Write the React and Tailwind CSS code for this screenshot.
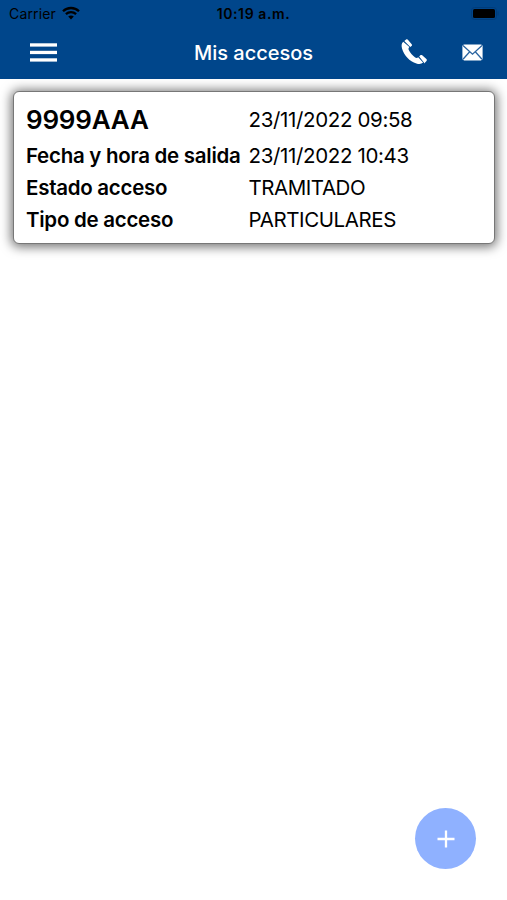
const rows = [
  { label: "Fecha y hora de salida", value: "23/11/2022 10:43", valueTracking: "tracking-[-0.35px]" },
  { label: "Estado acceso", value: "TRAMITADO", valueTracking: "tracking-[-0.45px]" },
  { label: "Tipo de acceso", value: "PARTICULARES", valueTracking: "tracking-[-0.4px]" }
];

function WifiIcon() {
  return (
    <svg className="ml-[6px] -mt-[2px]" width="18" height="14" viewBox="0 0 18 14" fill="none" stroke="#000" strokeWidth="2.3">
      <path d="M1 5.2C5.4.9 12.6.9 17 5.2" />
      <path d="M3.9 8.2c2.9-2.7 7.3-2.7 10.2 0" />
      <path d="M6.2 10.6c1.6-1.5 4-1.5 5.6 0L9 13.6z" fill="#000" stroke="none" />
    </svg>
  );
}

function PhoneIcon() {
  return (
    <svg width="26" height="26" viewBox="0 0 26 26" fill="#fff">
      <path d="M2.200 2.800C.6 4.200.2 6.600 1 9.400c2 7 7.600 12.800 14.400 15 2.800.9 5.200.6 6.700-.8l-4.900-5.300c-.9.9-2 .9-3 .2-2.900-1.900-5.100-4.600-6.400-7.400-.5-1.200-.4-2.100.6-3z" />
      <path d="m3.300 1.900 1.800-1.300c.7-.5 1.500-.4 2 .3l3.600 4.300c.5.700.4 1.400-.2 1.900l-1.200 1zM18.200 17.400l1.100-1.100c.6-.5 1.300-.5 1.900 0l4.200 3.800c.6.600.6 1.300.1 1.900l-2.300 2.400-.1-.6z" />
    </svg>
  );
}

function MailIcon() {
  return (
    <svg width="21" height="17" viewBox="0 0 21 17">
      <rect x=".4" y=".4" width="20.200" height="16" rx="1.800" fill="#fff" />
      <path d="m1 1.500 9.500 8.700L20 1.500M1 15.200l6.700-7.400M20 15.200l-6.700-7.400" fill="none" stroke="#2a64a0" strokeWidth="1.300" />
    </svg>
  );
}

function Header() {
  return (
    <header className="h-[79px] bg-[#00468b]">
      {/* Status bar */}
      <div className="grid h-[27px] grid-cols-3 items-center text-sm text-black">
        <div className="flex items-center pl-[9px]">
          <span className="tracking-[0.15px]">Carrier</span>
          <WifiIcon />
        </div>
        <span className="text-center font-semibold tracking-[0.6px]">10:19 a.m.</span>
        <div className="flex justify-end pr-[8px]">
          <svg width="28" height="13" viewBox="0 0 28 13">
            <rect x=".5" y=".5" width="25" height="12" rx="3" fill="none" stroke="#003c7a" />
            <rect x="2" y="2" width="22" height="9" rx="1.500" />
            <path d="M27 4.500v4" stroke="#003c7a" />
          </svg>
        </div>
      </div>

      {/* Navigation bar */}
      <div className="grid h-[52px] grid-cols-[1fr_auto_1fr] items-center pb-[2px]">
        <button className="ml-[29.5px]" aria-label="Menu">
          <svg width="27" height="19" viewBox="0 0 27 19" fill="#fff">
            <rect y=".3" width="27" height="3.300" />
            <rect y="7.800" width="27" height="3.300" />
            <rect y="15.300" width="27" height="3.300" />
          </svg>
        </button>
        <h1 className="pt-px text-xl font-medium text-white">Mis accesos</h1>
        <div className="flex items-center justify-end gap-[35px] pr-[24px]">
          <PhoneIcon />
          <MailIcon />
        </div>
      </div>
    </header>
  );
}

export default function App() {
  return (
    <div className="relative h-[900px] w-full overflow-hidden bg-white font-['Inter','Liberation_Sans',sans-serif] text-black">
      <Header />

      {/* Access card */}
      <main className="pl-[13px] pr-[12px] pt-[12px]">
        <div className="h-[153px] rounded-[6px] border border-[#777] bg-white pl-[12px] pt-[9px] shadow-[0_1px_11px_2px_rgba(0,0,0,0.55)]">
          <div className="flex h-[38px] items-center">
            <span className="w-[222.5px] pb-[2px] text-[26px] font-semibold tracking-[-0.2px]">9999AAA</span>
            <span className="text-[20.5px] tracking-[-0.35px]">23/11/2022 09:58</span>
          </div>
          {rows.map((row) => (
            <div key={row.label} className="flex h-[32px] items-center whitespace-nowrap pt-[2px] text-[20.5px]">
              <span className="w-[222.5px] shrink-0 font-semibold tracking-[-0.27px]">{row.label}</span>
              <span className={row.valueTracking}>{row.value}</span>
            </div>
          ))}
        </div>
      </main>

      <button className="absolute bottom-[31px] right-[31px] flex size-[61px] items-center justify-center rounded-full bg-[#8fb1ff]" aria-label="Añadir">
        <svg width="18" height="18" viewBox="0 0 18 18" stroke="#fff" strokeWidth="2.300">
          <path d="M9 .5v17M.5 9h17" />
        </svg>
      </button>
    </div>
  );
}
